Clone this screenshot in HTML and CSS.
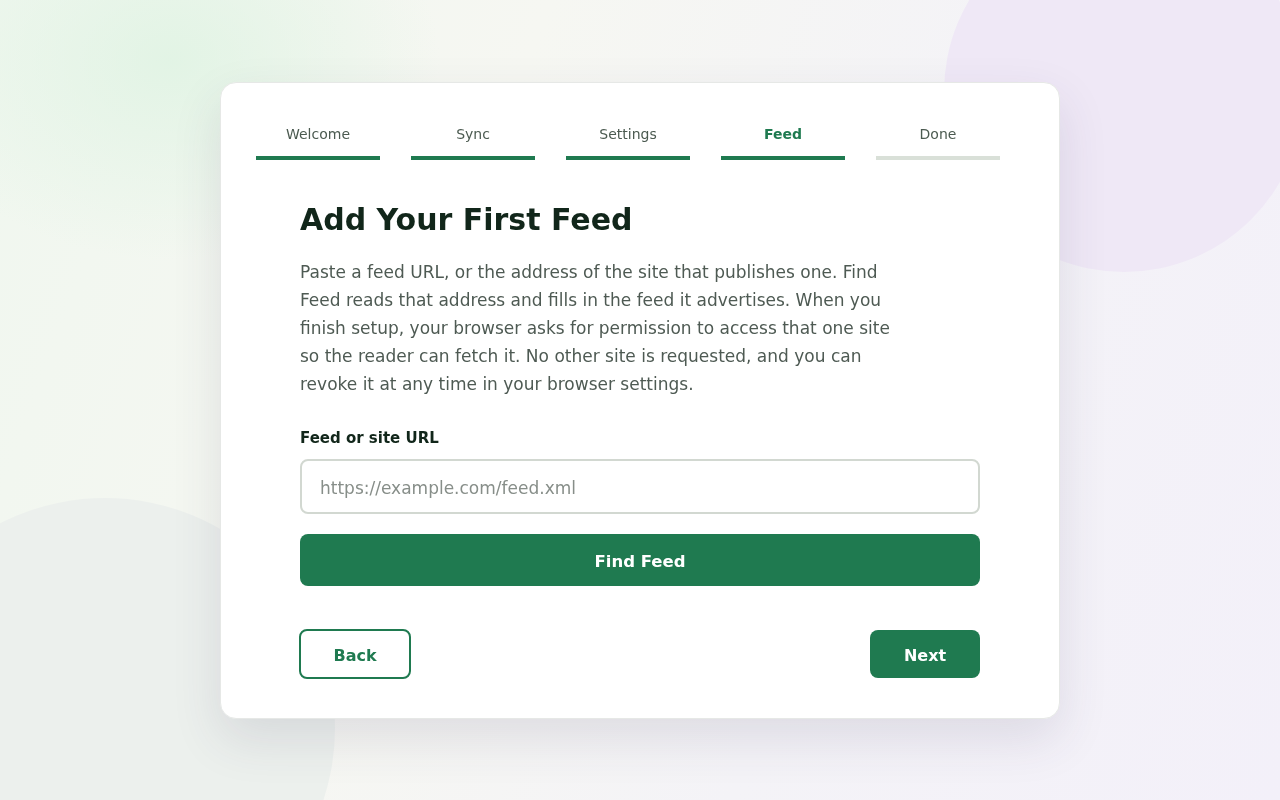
FILE: index.html
```html
<!DOCTYPE html>
<html lang="en">
<head>
    <meta charset="UTF-8">
    <meta name="viewport" content="width=device-width, initial-scale=1.0">
    <title>Setup - Add Your First Feed</title>
    <link rel="stylesheet" href="styles.css">
</head>
<body>
    <div class="backdrop">
        <div class="blob blob-green"></div>
        <div class="blob blob-purple"></div>
        <div class="blob blob-gray"></div>
    </div>
    <div class="page">
        <div class="card">
            <ol class="steps">
                <li class="step done"><span class="step-label">Welcome</span><span class="step-bar"></span></li>
                <li class="step done"><span class="step-label">Sync</span><span class="step-bar"></span></li>
                <li class="step done"><span class="step-label">Settings</span><span class="step-bar"></span></li>
                <li class="step current"><span class="step-label">Feed</span><span class="step-bar"></span></li>
                <li class="step"><span class="step-label">Done</span><span class="step-bar"></span></li>
            </ol>
            <div class="content">
                <h1>Add Your First Feed</h1>
                <p class="intro">Paste a feed URL, or the address of the site that publishes one. Find Feed reads that address and fills in the feed it advertises. When you finish setup, your browser asks for permission to access that one site so the reader can fetch it. No other site is requested, and you can revoke it at any time in your browser settings.</p>
                <label class="field-label" for="feed-url">Feed or site URL</label>
                <input class="field-input" id="feed-url" type="text" placeholder="https://example.com/feed.xml">
                <button class="btn btn-primary btn-wide">Find Feed</button>
                <div class="footer">
                    <button class="btn btn-outline">Back</button>
                    <button class="btn btn-primary btn-next">Next</button>
                </div>
            </div>
        </div>
    </div>
</body>
</html>
```

FILE: styles.css
```css
body, html {
    font-family: "DejaVu Sans", Verdana, sans-serif;
    margin: 0;
    padding: 0;
    height: 100%;
    background-color: #f4f3f7;
    color: #11261a;
}
.backdrop {
    position: fixed;
    inset: 0;
    overflow: hidden;
    background: linear-gradient(110deg, #f0f7ef 0%, #f6f7f2 35%, #f4f3f7 65%, #f3f0f9 100%);
}
.blob {
    position: absolute;
    border-radius: 50%;
}
.blob-green {
    left: -100px;
    top: -140px;
    width: 540px;
    height: 400px;
    background: radial-gradient(closest-side, rgba(222, 243, 226, 0.8), rgba(222, 243, 226, 0));
}
.blob-purple {
    left: 944px;
    top: -88px;
    width: 360px;
    height: 360px;
    background-color: #efe8f6;
}
.blob-gray {
    left: -125px;
    top: 498px;
    width: 460px;
    height: 460px;
    background-color: #ecf0ed;
}
.page {
    position: relative;
    min-height: 100%;
    display: flex;
    align-items: center;
    justify-content: center;
}
.card {
    width: 838px;
    background-color: #ffffff;
    border: 1px solid #e6e8e6;
    border-radius: 16px;
    box-shadow: 0 20px 50px rgba(60, 50, 90, 0.12);
    padding: 41px 0 39px;
}
.steps {
    list-style: none;
    margin: 0 0 0 35px;
    padding: 0;
    width: 744px;
    display: flex;
    gap: 31px;
}
.step {
    width: 124px;
    display: flex;
    flex-direction: column;
    align-items: center;
}
.step-label {
    font-size: 14px;
    line-height: 20px;
    color: #4b5a50;
}
.step-bar {
    margin-top: 12px;
    width: 100%;
    height: 4px;
    background-color: #d9e0d8;
}
.step.done .step-bar, .step.current .step-bar {
    background-color: #1f7a50;
}
.step.current .step-label {
    color: #1f7a50;
    font-weight: bold;
}
.content {
    padding: 0 79px;
    display: flex;
    flex-direction: column;
}
h1 {
    margin: 42px 0 20px;
    font-size: 30px;
    line-height: 36px;
    font-weight: bold;
    color: #11261a;
}
.intro {
    margin: 0;
    max-width: 600px;
    font-size: 17px;
    line-height: 28px;
    color: #4e5a53;
}
.field-label {
    margin-top: 30px;
    font-size: 15px;
    line-height: 20px;
    font-weight: bold;
    color: #11261a;
}
.field-input {
    margin-top: 11px;
    height: 55px;
    box-sizing: border-box;
    border: 2px solid #d2d8d1;
    border-radius: 8px;
    padding: 4px 18px 0;
    font-family: inherit;
    font-size: 17px;
    color: #11261a;
    outline: none;
}
.field-input::placeholder {
    color: #878e89;
}
.btn {
    font-family: inherit;
    font-weight: bold;
    font-size: 16px;
    border-radius: 8px;
    cursor: pointer;
    box-sizing: border-box;
    padding: 4px 0 0;
}
.btn-primary {
    background-color: #1f7a50;
    color: #ffffff;
    border: none;
}
.btn-wide {
    margin-top: 20px;
    height: 52px;
    font-size: 16.5px;
}
.footer {
    margin-top: 43px;
    display: flex;
    justify-content: space-between;
    align-items: center;
}
.btn-outline {
    width: 112px;
    height: 50px;
    margin-left: -1px;
    background-color: #ffffff;
    color: #1f7a50;
    border: 2px solid #1f7a50;
}
.btn-next {
    width: 110px;
    height: 48px;
}
```
